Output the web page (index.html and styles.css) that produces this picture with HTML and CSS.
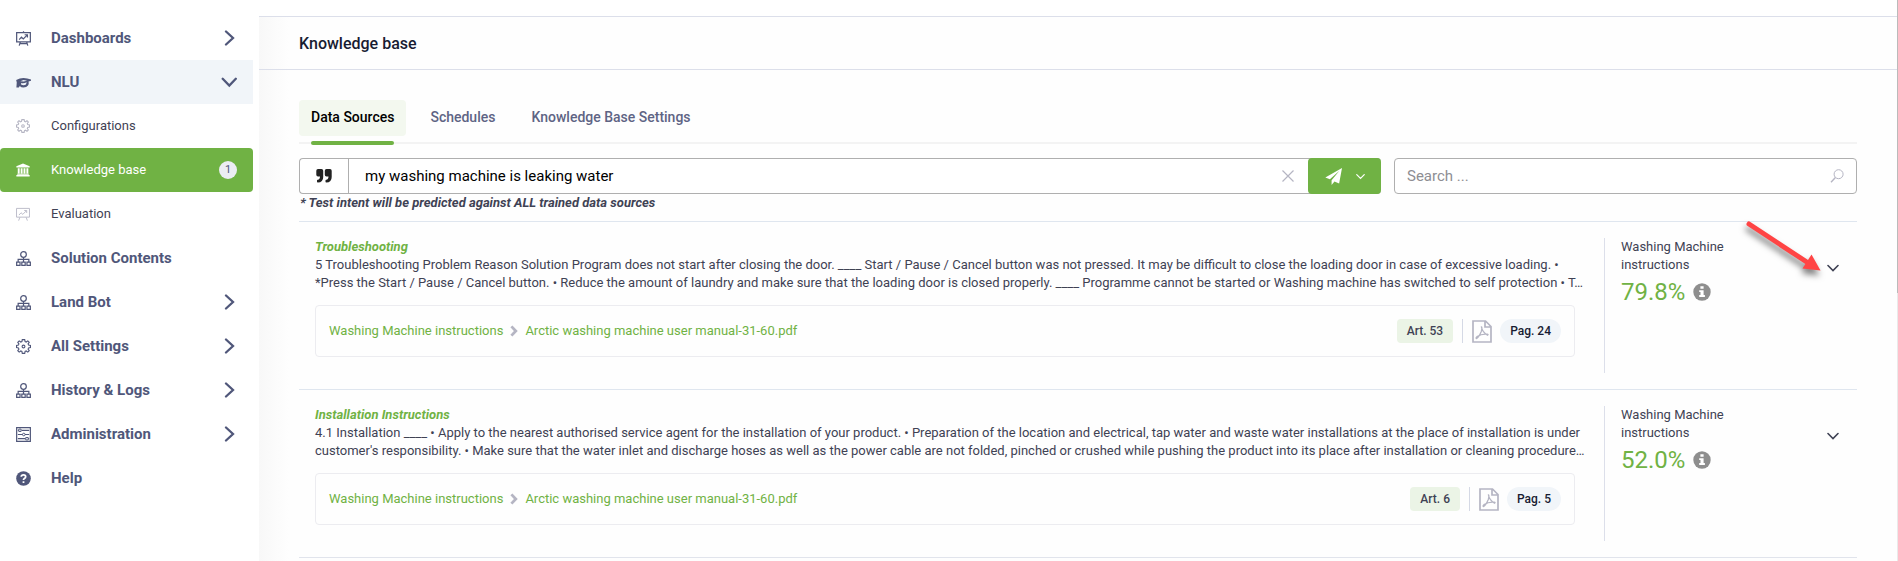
FILE: index.html
```html
<!DOCTYPE html>
<html lang="en">
<head>
<meta charset="utf-8">
<title>Knowledge base</title>
<link rel="stylesheet" href="styles.css">
</head>
<body>
<svg class="defs" aria-hidden="true">
  <symbol id="board" viewBox="0 0 16 16"><path d="M.7 1.700h14.600v9.800H.7zM8 .2v1.400M4.600 11.800 3.400 15.600M11.400 11.800l1.200 3.800M4 13.400h8M3.400 9.200l2.400-2.600 2 1.800 4-4M9.200 4h3v3" fill="none" stroke="currentColor" stroke-width="1.300"/></symbol>
  <symbol id="board-light" viewBox="0 0 16 16"><path d="M.6 1.600h14.800v10H.6zM4.400 11.800 3 15.600M11.600 11.800l1.400 3.800M3.400 9.200l2.400-2.600 2 1.800 4-4M9.400 4h2.800v2.800" fill="none" stroke="currentColor"/></symbol>
  <symbol id="cap" viewBox="0 0 16 16"><path d="M.2 5.400Q4 3.200 8 3.200T16 4.800v1.400l-2.600.6q.6 2.800-.6 4.400-1.600 2-4.800 2-2.600 0-4-1.600L3 13.200H.4L.8 8zM5.400 8.600v1.600q2.600 1.200 5.200 0l.8-2.400q-3 1.400-6 .8zM4.600 6.600l3.600.4 3.600-.8-3.800-.8z" fill="currentColor" fill-rule="evenodd"/></symbol>
  <symbol id="gear" viewBox="0 0 16 16"><path d="M6.700.7h2.600l.4 2 1.200.5 1.700-1.200 1.500 1.500-1.200 1.700.5 1.200 2 .4v2.400l-2 .4-.5 1.200 1.200 1.700-1.500 1.500-1.700-1.200-1.200.5-.4 2H6.700l-.4-2-1.200-.5L3.400 14l-1.500-1.500 1.200-1.700-.5-1.200-2-.4V6.800l2-.4.5-1.200L1.900 3.500 3.400 2l1.700 1.200 1.200-.5z" fill="none" stroke="currentColor" stroke-width="1.200"/><circle cx="8" cy="8" r="1.500" fill="none" stroke="currentColor" stroke-width="1.200"/></symbol>
  <symbol id="bank" viewBox="0 0 16 16"><path d="M8 .6 15.600 3.600v1.600H.4V3.600zM2 6h2.200v6H2zM5.300 6h2.200v6H5.300zM8.600 6h2.200v6H8.600zM11.900 6h2.200v6h-2.200zM1.400 12.400h13.200v1H1.400zM.4 13.800h15.200v1.600H.4z" fill="currentColor"/></symbol>
  <symbol id="tree" viewBox="0 0 16 16"><path d="M8 6.600v5M2.300 11.400V9h11.400v2.400M.7 11.800h3.600v3.500H.7zM6.200 11.800h3.600v3.500H6.200zM11.700 11.800h3.600v3.500h-3.600z" fill="none" stroke="currentColor" stroke-width="1.300"/><circle cx="8" cy="3.700" r="3" fill="none" stroke="currentColor" stroke-width="1.300"/></symbol>
  <symbol id="sliders" viewBox="0 0 16 16"><path d="M.7.7h14.600v14.600H.7zM2 3.500h1M6 3.500h8M2 8h5M9.500 8H14M2 12.500h8M13 12.500h1" fill="none" stroke="currentColor" stroke-width="1.300"/><path d="M3 2.200h2.400v2.600H3zM10.400 11.200h2.600v2.600h-2.600z" fill="none" stroke="currentColor"/><circle cx="8.300" cy="8" r="1.400" fill="none" stroke="currentColor"/></symbol>
  <symbol id="help" viewBox="0 0 16 16"><circle cx="8" cy="8" r="7.800" fill="currentColor"/><path d="M5.600 6.200Q5.700 4.200 8 4.200t2.300 1.900Q10.300 7.300 8.900 8 8 8.500 8 9.600M8 10.800v2" fill="none" stroke="#fff" stroke-width="1.900"/></symbol>
  <symbol id="right" viewBox="0 0 16 16"><path d="M5 1.500 12 8l-7 6.500" fill="none" stroke="currentColor" stroke-width="2.300" stroke-linecap="round"/></symbol>
  <symbol id="down" viewBox="0 0 16 16"><path d="m1.700 4.800 6.600 6.700 6.500-6.700" fill="none" stroke="currentColor" stroke-width="2.300" stroke-linecap="round"/></symbol>
  <symbol id="small-down" viewBox="0 0 12 12"><path d="m1 3.500 5 5 5-5" fill="none" stroke="currentColor" stroke-width="1.600" stroke-linecap="round"/></symbol>
  <symbol id="crumb" viewBox="0 0 8 12"><path d="m1.400 1.400 4.400 4.600-4.400 4.600" fill="none" stroke="currentColor" stroke-width="2.800"/></symbol>
  <symbol id="quote" viewBox="0 0 16 14"><path d="M2 0h3.500q1.700 0 1.700 1.700V8q0 5.400-5.400 5.600-.8 0-.8-.8v-1.200q0-.6.7-.8Q4 10.500 4 7.500H2Q.3 7.500.3 5.800V1.700Q.3 0 2 0zM10.500 0H14q1.700 0 1.700 1.700V8q0 5.400-5.400 5.600-.8 0-.8-.8v-1.200q0-.6.7-.8 2.300-.3 2.300-3.300h-2q-1.700 0-1.700-1.700V1.700Q8.800 0 10.500 0z" fill="currentColor"/></symbol>
  <symbol id="plane" viewBox="0 0 16 16"><path d="M16 0 13.300 14.600 8.900 12.800 6.200 16V11.600L13.600 2.600 4.600 10.600.3 8.900z" fill="currentColor"/></symbol>
  <symbol id="lens" viewBox="0 0 14 14"><circle cx="8.600" cy="5.200" r="4.500" fill="none" stroke="currentColor"/><path d="M5.400 8.600 1 13.200" fill="none" stroke="currentColor" stroke-width="1.400"/></symbol>
  <symbol id="info" viewBox="0 0 18 18"><circle cx="9" cy="9" r="8.700" fill="currentColor"/><path d="M7.400 3.200h3.200v2.600H7.400zM6.200 7.200h4.400v4.900h1.300v2H6.200v-2h1.300v-3H6.200z" fill="#fff"/></symbol>
  <symbol id="pdf" viewBox="0 0 20 23"><path d="M1 1h12.500L19 6.500V22H1zM13 1v6h6" fill="none" stroke="currentColor" stroke-width="1.700"/><path d="M9.300 6.500q.9 5.500 6.200 8.700 1.400-.8-.5-1.100Q9.500 13.600 5 16.600q-1.400 1.400-.7 2Q6.500 18 9.300 11.500q1.200-3.500 0-5" fill="none" stroke="currentColor" stroke-width="1.300"/></symbol>
</svg>
<div class="app">
  <nav class="sidebar">
    <a class="nav" href="#"><svg class="icon"><use href="#board"/></svg><span>Dashboards</span><svg class="chev"><use href="#right"/></svg></a>
    <a class="nav nav-open" href="#"><svg class="icon"><use href="#cap"/></svg><span>NLU</span><svg class="chev"><use href="#down"/></svg></a>
    <a class="nav nav-sub" href="#"><svg class="icon"><use href="#gear"/></svg><span>Configurations</span></a>
    <a class="nav nav-sub nav-active" href="#"><svg class="icon"><use href="#bank"/></svg><span>Knowledge base</span><b class="count">1</b></a>
    <a class="nav nav-sub" href="#"><svg class="icon"><use href="#board-light"/></svg><span>Evaluation</span></a>
    <a class="nav" href="#"><svg class="icon"><use href="#tree"/></svg><span>Solution Contents</span></a>
    <a class="nav" href="#"><svg class="icon"><use href="#tree"/></svg><span>Land Bot</span><svg class="chev"><use href="#right"/></svg></a>
    <a class="nav" href="#"><svg class="icon"><use href="#gear"/></svg><span>All Settings</span><svg class="chev"><use href="#right"/></svg></a>
    <a class="nav" href="#"><svg class="icon"><use href="#tree"/></svg><span>History &amp; Logs</span><svg class="chev"><use href="#right"/></svg></a>
    <a class="nav" href="#"><svg class="icon"><use href="#sliders"/></svg><span>Administration</span><svg class="chev"><use href="#right"/></svg></a>
    <a class="nav" href="#"><svg class="icon"><use href="#help"/></svg><span>Help</span></a>
  </nav>
  <main class="main">
    <header class="header"><h1>Knowledge base</h1></header>
    <div class="content">
      <div class="tabs">
        <button class="tab tab-active" type="button">Data Sources</button>
        <button class="tab" type="button">Schedules</button>
        <button class="tab" type="button">Knowledge Base Settings</button>
      </div>
      <div class="tools">
        <div class="group">
          <span class="quote"><svg><use href="#quote"/></svg></span>
          <input class="field" type="text" aria-label="Test intent" value="my washing machine is leaking water">
          <button class="clear" type="button" aria-label="Clear"><svg viewBox="0 0 12 12"><path d="m.5.500 11 11M11.500.500l-11 11" fill="none" stroke="currentColor" stroke-width="1.200"/></svg></button>
          <button class="send" type="button" aria-label="Send"><svg class="plane"><use href="#plane"/></svg><svg class="send-down"><use href="#small-down"/></svg></button>
        </div>
        <div class="search"><input class="field" type="text" aria-label="Search" placeholder="Search ..."><svg><use href="#lens"/></svg></div>
      </div>
      <p class="hint">* Test intent will be predicted against ALL trained data sources</p>
      <section class="results">
        <article class="row">
          <div class="body">
            <h2>Troubleshooting</h2>
            <p class="line">5 Troubleshooting Problem Reason Solution Program does not start after closing the door. ____ Start / Pause / Cancel button was not pressed. It may be difficult to close the loading door in case of excessive loading. • *Press the Start / Pause / Cancel button. • Reduce the amount of laundry and make sure that the loading door is closed properly. ____ Programme cannot be started or Washing machine has switched to self protection • T…</p>
            <div class="source">
              <a href="#">Washing Machine instructions</a><svg class="crumb"><use href="#crumb"/></svg><a href="#">Arctic washing machine user manual-31-60.pdf</a>
              <span class="art">Art. 53</span><span class="bar"></span><svg class="pdf"><use href="#pdf"/></svg><span class="page">Pag. 24</span>
            </div>
          </div>
          <div class="score"><p>Washing Machine instructions</p><div class="value">79.8%<svg><use href="#info"/></svg></div></div>
          <button class="expand" type="button" aria-label="Expand"><svg><use href="#small-down"/></svg></button>
          <svg class="arrow" viewBox="0 0 84 60"><g><path d="M5 5 62 42.500" stroke="#ff4444" stroke-width="5" stroke-linecap="round"/><path d="M67.500 35.500 76.500 51.500 58.500 49.500z" fill="#ff4444"/></g></svg>
        </article>
        <article class="row">
          <div class="body">
            <h2>Installation Instructions</h2>
            <p class="line">4.1 Installation ____ • Apply to the nearest authorised service agent for the installation of your product. • Preparation of the location and electrical, tap water and waste water installations at the place of installation is under customer's responsibility. • Make sure that the water inlet and discharge hoses as well as the power cable are not folded, pinched or crushed while pushing the product into its place after installation or cleaning procedure…</p>
            <div class="source">
              <a href="#">Washing Machine instructions</a><svg class="crumb"><use href="#crumb"/></svg><a href="#">Arctic washing machine user manual-31-60.pdf</a>
              <span class="art">Art. 6</span><span class="bar"></span><svg class="pdf"><use href="#pdf"/></svg><span class="page">Pag. 5</span>
            </div>
          </div>
          <div class="score"><p>Washing Machine instructions</p><div class="value">52.0%<svg><use href="#info"/></svg></div></div>
          <button class="expand" type="button" aria-label="Expand"><svg><use href="#small-down"/></svg></button>
        </article>
      </section>
    </div>
  </main>
  <div class="track"><div class="thumb"></div></div>
</div>
</body>
</html>
```
FILE: styles.css
```css
* { box-sizing: border-box; }
body { margin: 0; font: 13px/18px Roboto, sans-serif; color: #3f4254; background: #fff; }
h1, h2, p { margin: 0; }
a { text-decoration: none; }
button { font: inherit; border: 0; padding: 0; background: none; color: inherit; }
svg { display: block; flex: none; }
.defs { position: absolute; width: 0; height: 0; }
.app { display: flex; min-height: 100vh; }

.sidebar { width: 259px; flex: none; padding: 16px 6px 0 0; }
.nav { display: flex; align-items: center; height: 44px; padding: 0 16px; font-size: 15px; font-weight: 700; color: #50577a; }
.nav span { flex: 1; }
.icon { width: 15px; height: 15px; margin-right: 20px; }
.chev { width: 16px; height: 16px; }
.nav-open { background: #f1f5f9; }
.nav-sub { font-size: 13px; font-weight: 400; color: #3f4254; }
.nav-sub .icon { width: 14px; height: 14px; margin-right: 21px; color: #b5b5c3; }
.nav-active { background: #70b244; color: #fff; border-radius: 4px; }
.nav-active .icon { color: #fff; }
.count { width: 18px; height: 18px; border-radius: 9px; background: #ebedf3; color: #50577a; font-size: 11px; font-weight: 400; text-align: center; }

.main { flex: 1; min-width: 0; padding-top: 16px; background: linear-gradient(90deg, #f8f8f8, #fefefe 30px) 0 16px no-repeat; }
.header { border: solid #dcdfea; border-width: 1px 0; padding: 17px 40px 15px; }
h1 { font-size: 16px; line-height: 20px; font-weight: 500; color: #181c32; }
.content { padding: 30px 40px 0; }

.tabs { display: flex; gap: 12px; padding-bottom: 6px; border-bottom: 2px solid #f3f3f3; }
.tab { position: relative; height: 36px; padding: 0 12px 2px; font-size: 14px; font-weight: 500; color: #5e6484; border-radius: 4px; }
.tab-active { color: #000; background: #f3f8ef; }
.tab-active::after { content: ""; position: absolute; left: 12px; right: 12px; bottom: -9px; height: 4px; border-radius: 2px; background: #70b244; }

.tools { display: flex; gap: 13px; margin-top: 14px; }
.group, .search { display: flex; align-items: center; height: 36px; border: 1px solid #afafaf; border-radius: 4px; background: #fff; }
.group { flex: 1; border-right: 0; }
.search { width: 463px; padding-right: 12px; color: #b5b5c3; }
.search svg { width: 14px; height: 14px; }
.quote { display: grid; place-items: center; width: 49px; height: 100%; border-right: 1px solid #afafaf; color: #222; }
.quote svg { width: 16px; height: 14px; }
.field { flex: 1; min-width: 0; height: 100%; border: 0; padding: 0 16px; background: none; font: 15px Roboto, sans-serif; color: #000; outline: 0; }
.search .field { padding: 0 12px; }
.field::placeholder { color: #8e8e93; opacity: 1; }
.clear { margin-right: 14px; color: #b5b5c3; }
.clear svg { width: 12px; height: 12px; }
.send { display: flex; align-items: center; justify-content: center; gap: 14px; width: 73px; height: 36px; border-radius: 4px; background: #70b244; color: #fff; }
.plane { width: 17px; height: 17px; }
.send-down { width: 9px; height: 9px; }
.hint { font-weight: 700; font-style: italic; padding-left: 1px; margin-bottom: 9px; }

.results { border-bottom: 1px solid #e1e4ec; }
.row { position: relative; display: flex; min-height: 168px; padding: 16px 9px 16px 16px; border-top: 1px solid #dfe6ef; }
.body { flex: 1; min-width: 0; }
h2 { font-size: 13px; line-height: 18px; font-weight: 700; font-style: italic; color: #70b244; }
.line { margin-right: 19px; }
.source { display: flex; align-items: center; height: 52px; margin: 13px 29px 0 0; padding: 0 13px; border: 1px solid #ececf0; border-radius: 4px; }
.source a { color: #70b244; }
.crumb { width: 8px; height: 12px; margin: 0 7px; color: #b5b5c3; }
.art, .page { padding: 0 10px; font-size: 12px; line-height: 24px; font-weight: 500; }
.art { margin-left: auto; background: #ebf4e6; border-radius: 4px; }
.bar { width: 1px; height: 24px; margin: 0 9px; background: #d5d9e5; }
.pdf { width: 20px; height: 23px; margin-right: 8px; color: #b5b5c3; }
.page { background: #f1f5f9; border-radius: 12px; color: #181c32; }
.score { width: 214px; padding: 0 78px 0 16px; border-left: 1px solid #dcdfea; }
.value { display: flex; align-items: center; gap: 8px; margin-top: 4px; font-size: 24px; line-height: 28px; color: #70b244; }
.value svg { width: 18px; height: 18px; color: #8e8e8e; }
.expand { width: 30px; height: 60px; }
.expand svg { width: 12px; height: 12px; margin: 0 auto; }
.arrow { position: absolute; right: 29px; top: -3px; width: 84px; height: 60px; filter: drop-shadow(-1px 5px 3px rgba(0, 0, 0, 0.5)); }

.track { width: 1px; background: #eaeaea; }
.thumb { height: 293px; background: #bbb; }
```
